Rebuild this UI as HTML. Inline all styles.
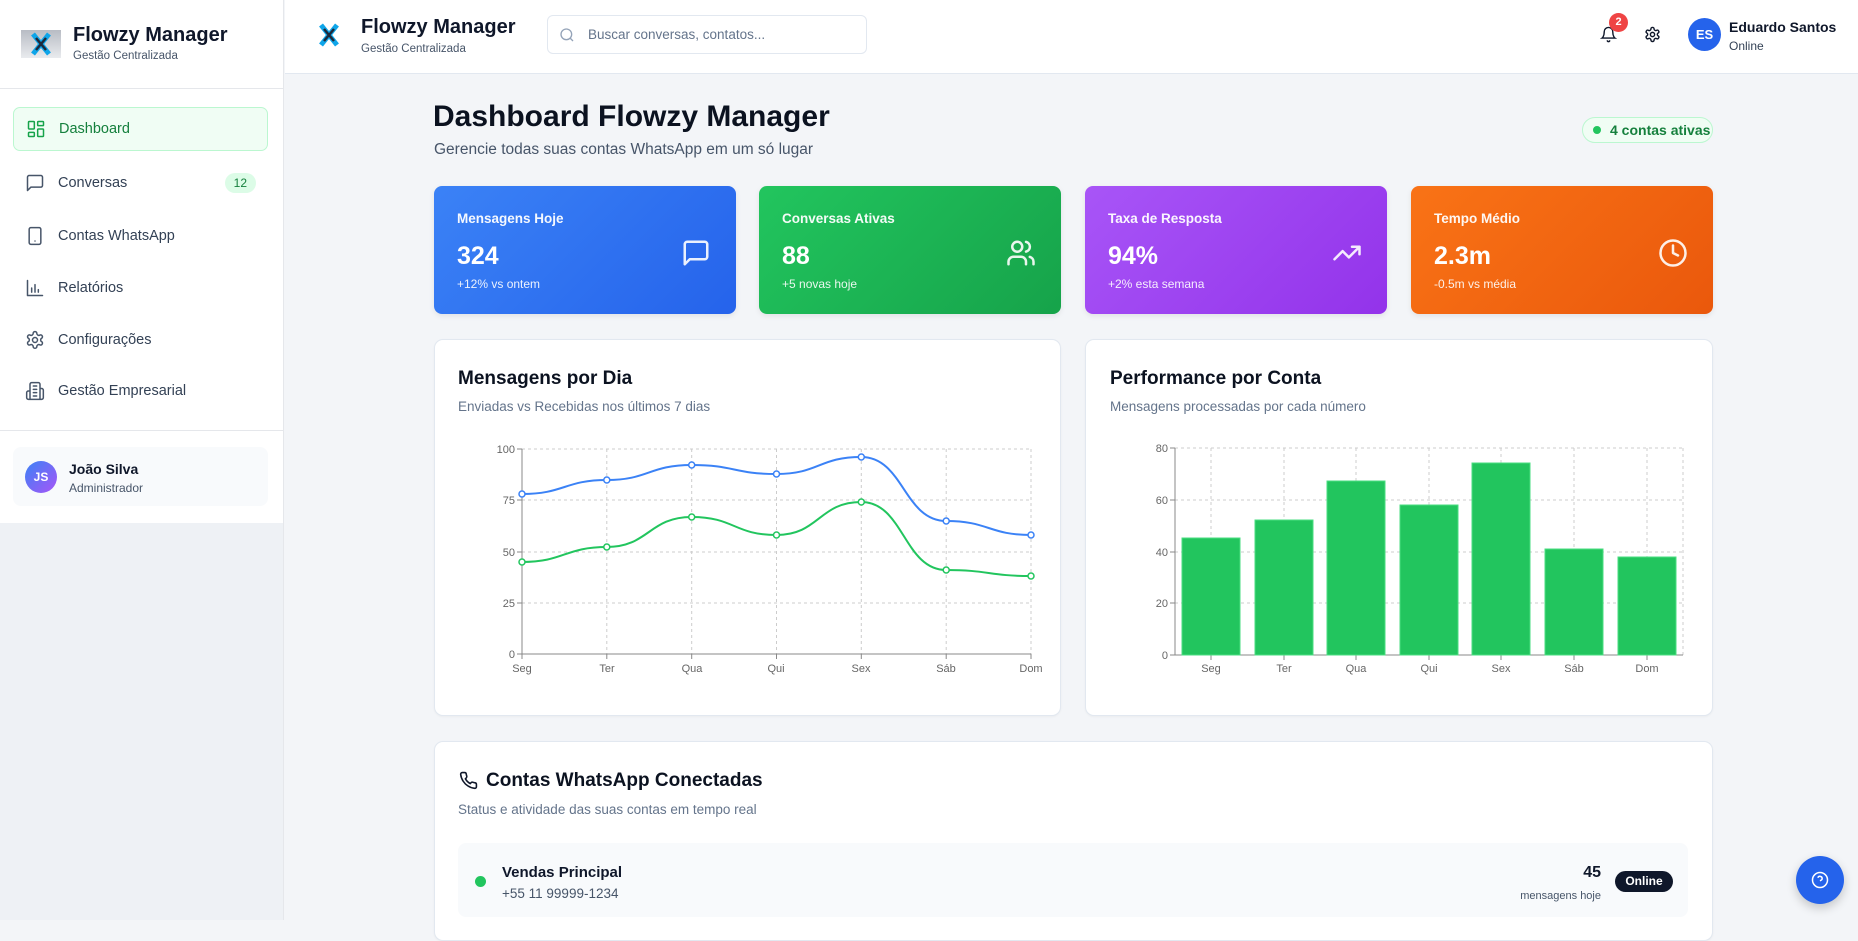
<!DOCTYPE html>
<html><head><meta charset="utf-8">
<style>
*{box-sizing:border-box;margin:0;padding:0}
body{width:1858px;height:920px;overflow:hidden;background:#f3f5f8;font-family:"Liberation Sans",sans-serif;color:#0f172a;position:relative}
.abs{position:absolute}
.side{left:0;top:0;width:284px;height:523px;background:#fff;border-right:1px solid #e5e7eb}
.nav{position:absolute;left:13px;width:255px;height:44px;display:flex;align-items:center;padding-left:12px;font-size:14.5px;color:#334155}
.nav svg{width:20px;height:20px;margin-right:13px;fill:none;stroke:#475569;stroke-width:1.8;stroke-linecap:round;stroke-linejoin:round}
.card{position:absolute;background:#fff;border:1px solid #e2e8f0;border-radius:9px;box-shadow:0 1px 2px rgba(0,0,0,.04)}
.stat{position:absolute;top:186px;width:302px;height:128px;border-radius:8px;color:#fff;box-shadow:0 2px 6px rgba(0,0,0,.08)}
.stat .l{position:absolute;left:23px;top:25px;font-size:13.5px;font-weight:bold;opacity:.95}
.stat .v{position:absolute;left:23px;top:56px;font-size:25px;font-weight:bold}
.stat .s{position:absolute;left:23px;top:91px;font-size:12px;opacity:.9}
.stat svg{position:absolute;right:25px;top:52px;width:30px;height:30px;fill:none;stroke:#fff;stroke-width:2;stroke-linecap:round;stroke-linejoin:round;opacity:.9}
.ct{font-size:19px;font-weight:bold;color:#0b1220}
.cs{font-size:13.5px;color:#64748b}
</style></head><body>
<div class="abs side">
  <div class="abs" style="left:21px;top:30px;width:40px;height:28px;background:linear-gradient(#b8bcc4,#e9ebee);"></div>
  <svg class="abs" style="left:29px;top:31px" width="24" height="26" viewBox="0 0 24 26"><path d="M4 3 L20 23 M20 3 L4 23" stroke="#0ea5e9" stroke-width="5"/><path d="M7 7 L17 19 M17 7 L7 19" stroke="#1e293b" stroke-width="2.5"/></svg>
  <div class="abs" style="left:73px;top:24px;font-size:20px;font-weight:bold">Flowzy Manager</div>
  <div class="abs" style="left:73px;top:50px;font-size:11.5px;color:#475569">Gestão Centralizada</div>
  <div class="abs" style="left:0;top:88px;width:283px;height:1px;background:#e5e7eb"></div>
  <div class="nav" style="top:107px;background:#f0fdf4;border:1px solid #bbf7d0;border-radius:7px;color:#15803d"><svg style="stroke:#16a34a" viewBox="0 0 24 24"><rect x="3" y="3" width="7" height="9" rx="1"/><rect x="14" y="3" width="7" height="5" rx="1"/><rect x="14" y="12" width="7" height="9" rx="1"/><rect x="3" y="16" width="7" height="5" rx="1"/></svg>Dashboard</div>
  <div class="nav" style="top:161px"><svg viewBox="0 0 24 24"><path d="M21 15a2 2 0 0 1-2 2H7l-4 4V5a2 2 0 0 1 2-2h14a2 2 0 0 1 2 2z"/></svg>Conversas<span style="position:absolute;right:12px;top:12px;background:#dcfce7;color:#15803d;font-size:12px;border-radius:10px;padding:3px 9px">12</span></div>
  <div class="nav" style="top:214px"><svg viewBox="0 0 24 24"><rect x="5" y="2" width="14" height="20" rx="2"/><path d="M12 18h.01"/></svg>Contas WhatsApp</div>
  <div class="nav" style="top:266px"><svg viewBox="0 0 24 24"><path d="M3 3v18h18M8 17v-5M12 17V8M16 17v-3"/></svg>Relatórios</div>
  <div class="nav" style="top:318px"><svg viewBox="0 0 24 24"><circle cx="12" cy="12" r="3"/><path d="M12.2 2h-.4a2 2 0 0 0-2 2v.2a2 2 0 0 1-1 1.7l-.4.3a2 2 0 0 1-2 0l-.2-.1a2 2 0 0 0-2.7.7l-.2.4a2 2 0 0 0 .7 2.7l.2.1a2 2 0 0 1 1 1.7v.5a2 2 0 0 1-1 1.7l-.2.1a2 2 0 0 0-.7 2.7l.2.4a2 2 0 0 0 2.7.7l.2-.1a2 2 0 0 1 2 0l.4.3a2 2 0 0 1 1 1.7v.2a2 2 0 0 0 2 2h.4a2 2 0 0 0 2-2v-.2a2 2 0 0 1 1-1.7l.4-.3a2 2 0 0 1 2 0l.2.1a2 2 0 0 0 2.7-.7l.2-.4a2 2 0 0 0-.7-2.7l-.2-.1a2 2 0 0 1-1-1.7v-.5a2 2 0 0 1 1-1.7l.2-.1a2 2 0 0 0 .7-2.7l-.2-.4a2 2 0 0 0-2.7-.7l-.2.1a2 2 0 0 1-2 0l-.4-.3a2 2 0 0 1-1-1.7V4a2 2 0 0 0-2-2z"/></svg>Configurações</div>
  <div class="nav" style="top:369px"><svg viewBox="0 0 24 24"><path d="M6 22V4a2 2 0 0 1 2-2h8a2 2 0 0 1 2 2v18zM6 12H4a2 2 0 0 0-2 2v6a2 2 0 0 0 2 2h2M18 9h2a2 2 0 0 1 2 2v9a2 2 0 0 1-2 2h-2M10 6h4M10 10h4M10 14h4M10 18h4"/></svg>Gestão Empresarial</div>
  <div class="abs" style="left:0;top:430px;width:283px;height:1px;background:#e5e7eb"></div>
  <div class="abs" style="left:13px;top:447px;width:255px;height:59px;background:#f8fafc;border-radius:8px"></div>
  <div class="abs" style="left:25px;top:461px;width:32px;height:32px;border-radius:50%;background:linear-gradient(135deg,#3b82f6,#a855f7);color:#fff;font-size:12px;font-weight:bold;text-align:center;line-height:32px">JS</div>
  <div class="abs" style="left:69px;top:461px;font-size:14px;font-weight:bold">João Silva</div>
  <div class="abs" style="left:69px;top:481px;font-size:12px;color:#475569">Administrador</div>
</div>
<div class="abs" style="left:0;top:523px;width:284px;height:397px;background:#eef1f5;border-right:1px solid #e5e7eb"></div>
<div class="abs" style="left:285px;top:0;width:1573px;height:74px;background:#fff;border-bottom:1px solid #e2e8f0"></div>
<svg class="abs" style="left:318px;top:22px" width="22" height="26" viewBox="0 0 22 26"><path d="M3 3 L19 23 M19 3 L3 23" stroke="#0ea5e9" stroke-width="5"/><path d="M6 7 L16 19 M16 7 L6 19" stroke="#1e293b" stroke-width="2.5"/></svg>
<div class="abs" style="left:361px;top:16px;font-size:20px;font-weight:bold">Flowzy Manager</div>
<div class="abs" style="left:361px;top:43px;font-size:11.5px;color:#475569">Gestão Centralizada</div>
<div class="abs" style="left:547px;top:15px;width:320px;height:39px;border:1px solid #e2e8f0;border-radius:6px"></div>
<svg class="abs" style="left:559px;top:27px" width="16" height="16" viewBox="0 0 24 24" fill="none" stroke="#94a3b8" stroke-width="2"><circle cx="11" cy="11" r="8"/><path d="M21 21l-4.3-4.3"/></svg>
<div class="abs" style="left:588px;top:27px;font-size:13.5px;color:#64748b">Buscar conversas, contatos...</div>
<svg class="abs" style="left:1600px;top:25px" width="17" height="19" viewBox="0 0 24 24" fill="none" stroke="#0f172a" stroke-width="2" stroke-linecap="round"><path d="M6 8a6 6 0 0 1 12 0c0 7 3 9 3 9H3s3-2 3-9M10.3 21a1.9 1.9 0 0 0 3.4 0"/></svg>
<div class="abs" style="left:1609px;top:13px;width:19px;height:19px;border-radius:50%;background:#ef4444;color:#fff;font-size:11px;font-weight:bold;text-align:center;line-height:19px">2</div>
<svg class="abs" style="left:1644px;top:26px" width="17" height="17" viewBox="0 0 24 24" fill="none" stroke="#0f172a" stroke-width="2"><circle cx="12" cy="12" r="3"/><path d="M12.2 2h-.4a2 2 0 0 0-2 2v.2a2 2 0 0 1-1 1.7l-.4.3a2 2 0 0 1-2 0l-.2-.1a2 2 0 0 0-2.7.7l-.2.4a2 2 0 0 0 .7 2.7l.2.1a2 2 0 0 1 1 1.7v.5a2 2 0 0 1-1 1.7l-.2.1a2 2 0 0 0-.7 2.7l.2.4a2 2 0 0 0 2.7.7l.2-.1a2 2 0 0 1 2 0l.4.3a2 2 0 0 1 1 1.7v.2a2 2 0 0 0 2 2h.4a2 2 0 0 0 2-2v-.2a2 2 0 0 1 1-1.7l.4-.3a2 2 0 0 1 2 0l.2.1a2 2 0 0 0 2.7-.7l.2-.4a2 2 0 0 0-.7-2.7l-.2-.1a2 2 0 0 1-1-1.7v-.5a2 2 0 0 1 1-1.7l.2-.1a2 2 0 0 0 .7-2.7l-.2-.4a2 2 0 0 0-2.7-.7l-.2.1a2 2 0 0 1-2 0l-.4-.3a2 2 0 0 1-1-1.7V4a2 2 0 0 0-2-2z"/></svg>
<div class="abs" style="left:1688px;top:18px;width:33px;height:33px;border-radius:50%;background:#2563eb;color:#fff;font-size:13px;font-weight:bold;text-align:center;line-height:33px">ES</div>
<div class="abs" style="left:1729px;top:19px;font-size:14px;font-weight:bold">Eduardo Santos</div>
<div class="abs" style="left:1729px;top:39px;font-size:12px;color:#334155">Online</div>
<div class="abs" style="left:433px;top:100px;font-size:30px;font-weight:bold;color:#0b1220">Dashboard Flowzy Manager</div>
<div class="abs" style="left:434px;top:141px;font-size:15.5px;color:#475569">Gerencie todas suas contas WhatsApp em um só lugar</div>
<div class="abs" style="left:1582px;top:117px;width:131px;height:26px;border:1px solid #bbf7d0;background:#f0fdf4;border-radius:13px;font-size:14px;font-weight:bold;color:#15803d;line-height:24px;padding-left:27px">4 contas ativas</div>
<div class="abs" style="left:1593px;top:126px;width:8px;height:8px;border-radius:50%;background:#22c55e"></div>
<div class="stat" style="left:434px;background:linear-gradient(135deg,#3b82f6,#2563eb)"><div class="l">Mensagens Hoje</div><div class="v">324</div><div class="s">+12% vs ontem</div><svg viewBox="0 0 24 24"><path d="M21 15a2 2 0 0 1-2 2H7l-4 4V5a2 2 0 0 1 2-2h14a2 2 0 0 1 2 2z"/></svg></div>
<div class="stat" style="left:759px;background:linear-gradient(135deg,#22c55e,#16a34a)"><div class="l">Conversas Ativas</div><div class="v">88</div><div class="s">+5 novas hoje</div><svg viewBox="0 0 24 24"><path d="M16 21v-2a4 4 0 0 0-4-4H6a4 4 0 0 0-4 4v2"/><circle cx="9" cy="7" r="4"/><path d="M22 21v-2a4 4 0 0 0-3-3.9M16 3.1a4 4 0 0 1 0 7.8"/></svg></div>
<div class="stat" style="left:1085px;background:linear-gradient(135deg,#a855f7,#9333ea)"><div class="l">Taxa de Resposta</div><div class="v">94%</div><div class="s">+2% esta semana</div><svg viewBox="0 0 24 24"><path d="M22 7l-8.5 8.5-5-5L2 17M16 7h6v6"/></svg></div>
<div class="stat" style="left:1411px;background:linear-gradient(135deg,#f97316,#ea580c)"><div class="l">Tempo Médio</div><div class="v">2.3m</div><div class="s">-0.5m vs média</div><svg viewBox="0 0 24 24"><circle cx="12" cy="12" r="10"/><path d="M12 6v6l4 2"/></svg></div>
<div class="card" style="left:434px;top:339px;width:627px;height:377px">
  <div class="abs ct" style="left:23px;top:28px">Mensagens por Dia</div>
  <div class="abs cs" style="left:23px;top:59px">Enviadas vs Recebidas nos últimos 7 dias</div>
</div>
<div class="card" style="left:1085px;top:339px;width:628px;height:377px">
  <div class="abs ct" style="left:24px;top:28px">Performance por Conta</div>
  <div class="abs cs" style="left:24px;top:59px">Mensagens processadas por cada número</div>
</div>
<svg class="abs" style="left:0;top:0" width="1858" height="920" font-family="Liberation Sans, sans-serif" font-size="11" fill="#666">
 <g stroke="#ccc" stroke-dasharray="3 3" fill="none">
  <path d="M522 449H1031M522 500H1031M522 552H1031M522 603H1031"/>
  <path d="M606.8 449V654M691.7 449V654M776.5 449V654M861.3 449V654M946.2 449V654M1031 449V654"/>
  <path d="M1175 448H1683M1175 500H1683M1175 552H1683M1175 603H1683"/>
  <path d="M1211 448V655M1284 448V655M1356 448V655M1429 448V655M1501 448V655M1574 448V655M1647 448V655M1683 448V655"/>
 </g>
 <g stroke="#888" fill="none"><path d="M522 449V654H1031"/><path d="M517 449h5M517 500h5M517 552h5M517 603h5M517 654h5M522 654v5M606.8 654v5M691.7 654v5M776.5 654v5M861.3 654v5M946.2 654v5M1031 654v5"/>
 <path d="M1175 448V655H1683"/><path d="M1170 448h5M1170 500h5M1170 552h5M1170 603h5M1170 655h5M1211 655v5M1284 655v5M1356 655v5M1429 655v5M1501 655v5M1574 655v5M1647 655v5"/></g>
 <g text-anchor="end"><text x="515" y="453">100</text><text x="515" y="504">75</text><text x="515" y="556">50</text><text x="515" y="607">25</text><text x="515" y="658">0</text>
 <text x="1168" y="452">80</text><text x="1168" y="504">60</text><text x="1168" y="556">40</text><text x="1168" y="607">20</text><text x="1168" y="659">0</text></g>
 <g text-anchor="middle"><text x="522" y="672">Seg</text><text x="607" y="672">Ter</text><text x="692" y="672">Qua</text><text x="776" y="672">Qui</text><text x="861" y="672">Sex</text><text x="946" y="672">Sáb</text><text x="1031" y="672">Dom</text>
 <text x="1211" y="672">Seg</text><text x="1284" y="672">Ter</text><text x="1356" y="672">Qua</text><text x="1429" y="672">Qui</text><text x="1501" y="672">Sex</text><text x="1574" y="672">Sáb</text><text x="1647" y="672">Dom</text></g>
 <g fill="#22c55e" stroke="#4ade80" stroke-width="1">
  <rect x="1182" y="538" width="58" height="117"/><rect x="1255" y="520" width="58" height="135"/><rect x="1327" y="481" width="58" height="174"/><rect x="1400" y="505" width="58" height="150"/><rect x="1472" y="463" width="58" height="192"/><rect x="1545" y="549" width="58" height="106"/><rect x="1618" y="557" width="58" height="98"/>
 </g>
 <path fill="none" stroke="#3b82f6" stroke-width="2" d="M522 494C564 494 565 480 606.8 480S649 465 691.7 465S734 474 776.5 474S819 457 861.3 457S904 521 946.2 521S989 535 1031 535"/>
 <path fill="none" stroke="#22c55e" stroke-width="2" d="M522 562C564 562 565 547 606.8 547S649 517 691.7 517S734 535 776.5 535S819 502 861.3 502S904 570 946.2 570S989 576 1031 576"/>
 <g fill="#fff" stroke="#3b82f6" stroke-width="1.5"><circle cx="522" cy="494" r="3"/><circle cx="606.8" cy="480" r="3"/><circle cx="691.7" cy="465" r="3"/><circle cx="776.5" cy="474" r="3"/><circle cx="861.3" cy="457" r="3"/><circle cx="946.2" cy="521" r="3"/><circle cx="1031" cy="535" r="3"/></g>
 <g fill="#fff" stroke="#22c55e" stroke-width="1.5"><circle cx="522" cy="562" r="3"/><circle cx="606.8" cy="547" r="3"/><circle cx="691.7" cy="517" r="3"/><circle cx="776.5" cy="535" r="3"/><circle cx="861.3" cy="502" r="3"/><circle cx="946.2" cy="570" r="3"/><circle cx="1031" cy="576" r="3"/></g>
</svg>
<div class="card" style="left:434px;top:741px;width:1279px;height:200px">
  <svg class="abs" style="left:24px;top:29px" width="19" height="19" viewBox="0 0 24 24" fill="none" stroke="#0f172a" stroke-width="2"><path d="M22 16.9v3a2 2 0 0 1-2.2 2 19.8 19.8 0 0 1-8.6-3.1 19.5 19.5 0 0 1-6-6A19.8 19.8 0 0 1 2.1 4.2 2 2 0 0 1 4.1 2h3a2 2 0 0 1 2 1.7c.1 1 .4 1.9.7 2.8a2 2 0 0 1-.5 2.1L8.1 9.9a16 16 0 0 0 6 6l1.3-1.3a2 2 0 0 1 2.1-.4c.9.3 1.8.6 2.8.7a2 2 0 0 1 1.7 2z"/></svg>
  <div class="abs ct" style="left:51px;top:28px">Contas WhatsApp Conectadas</div>
  <div class="abs cs" style="left:23px;top:60px">Status e atividade das suas contas em tempo real</div>
  <div class="abs" style="left:23px;top:101px;width:1230px;height:74px;background:#f8fafc;border-radius:8px"></div>
  <div class="abs" style="left:40px;top:134px;width:11px;height:11px;border-radius:50%;background:#22c55e"></div>
  <div class="abs" style="left:67px;top:122px;font-size:15px;font-weight:bold">Vendas Principal</div>
  <div class="abs" style="left:67px;top:144px;font-size:13.5px;color:#475569">+55 11 99999-1234</div>
  <div class="abs" style="left:1116px;top:122px;width:50px;text-align:right;font-size:16px;font-weight:bold">45</div>
  <div class="abs" style="left:1066px;top:148px;width:100px;text-align:right;font-size:11px;color:#475569">mensagens hoje</div>
  <div class="abs" style="left:1180px;top:129px;width:58px;height:21px;background:#0f172a;color:#fff;border-radius:11px;font-size:12px;font-weight:bold;text-align:center;line-height:21px">Online</div>
</div>
<div class="abs" style="left:1796px;top:856px;width:48px;height:48px;border-radius:50%;background:#2563eb;box-shadow:0 4px 10px rgba(0,0,0,.2)"></div>
<svg class="abs" style="left:1811px;top:871px" width="18" height="18" viewBox="0 0 24 24" fill="none" stroke="#fff" stroke-width="2"><circle cx="12" cy="12" r="10"/><path d="M9.1 9a3 3 0 0 1 5.8 1c0 2-3 3-3 3M12 17h.01"/></svg>
</body></html>
